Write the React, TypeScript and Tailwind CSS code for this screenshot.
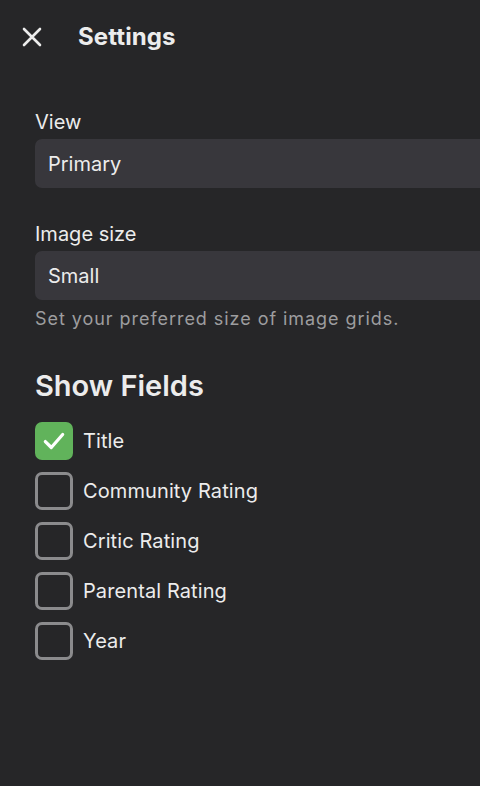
import React from "react";

const fields = [
  { label: "Title", checked: true },
  { label: "Community Rating", checked: false },
  { label: "Critic Rating", checked: false },
  { label: "Parental Rating", checked: false },
  { label: "Year", checked: false },
];

function Select({ value }: { value: string }) {
  return (
    <div className="w-[480px] h-[49px] rounded-[7px] bg-[#38373c] flex items-center pl-[13px] text-[20px] leading-[24px] text-[#ececec]">
      {value}
    </div>
  );
}

export default function App() {
  return (
    <div
      className="w-[480px] h-[786px] overflow-hidden bg-[#262628] text-[#ececec]"
      style={{ fontFamily: "Inter, 'Noto Sans', sans-serif" }}
    >
      <div className="h-[74px] flex items-center">
        <div className="w-[78px] flex items-center pl-[22px]">
          <svg width="20" height="20" viewBox="0 0 20 20" fill="none" stroke="#ececec" strokeWidth="2.6" strokeLinecap="round">
            <path d="M2 2 L18 18 M18 2 L2 18" />
          </svg>
        </div>
        <div className="text-[24px] leading-[30px] font-bold tracking-[0.1px]">Settings</div>
      </div>
      <div className="pl-[35px] flex flex-col">
        <div className="mt-[36px] text-[20px] leading-[24px]">View</div>
        <div className="mt-[5px]">
          <Select value="Primary" />
        </div>
        <div className="mt-[34px] text-[20px] leading-[24px]">Image size</div>
        <div className="mt-[5px]">
          <Select value="Small" />
        </div>
        <div className="mt-[7px] text-[18px] leading-[24px] tracking-[0.95px] text-[#9d9d9f]">Set your preferred size of image grids.</div>
        <div className="mt-[37px] text-[29px] leading-[36px] font-semibold">Show Fields</div>
        <div className="mt-[18px] flex flex-col gap-[12px]">
          {fields.map((f) => (
            <div key={f.label} className="flex items-center h-[38px]">
              {f.checked ? (
                <div className="w-[38px] h-[38px] rounded-[7px] bg-[#61b35b] flex items-center justify-center">
                  <svg width="26" height="26" viewBox="0 0 24 24" fill="none" stroke="#ffffff" strokeWidth="3" strokeLinecap="round" strokeLinejoin="round">
                    <path d="M4 12.5 L9.5 18 L20 6" />
                  </svg>
                </div>
              ) : (
                <div className="w-[38px] h-[38px] rounded-[7px] border-[3px] border-[#8b8b8d]" />
              )}
              <div className="ml-[10px] text-[20px] leading-[24px] tracking-[0.1px]">{f.label}</div>
            </div>
          ))}
        </div>
      </div>
    </div>
  );
}
